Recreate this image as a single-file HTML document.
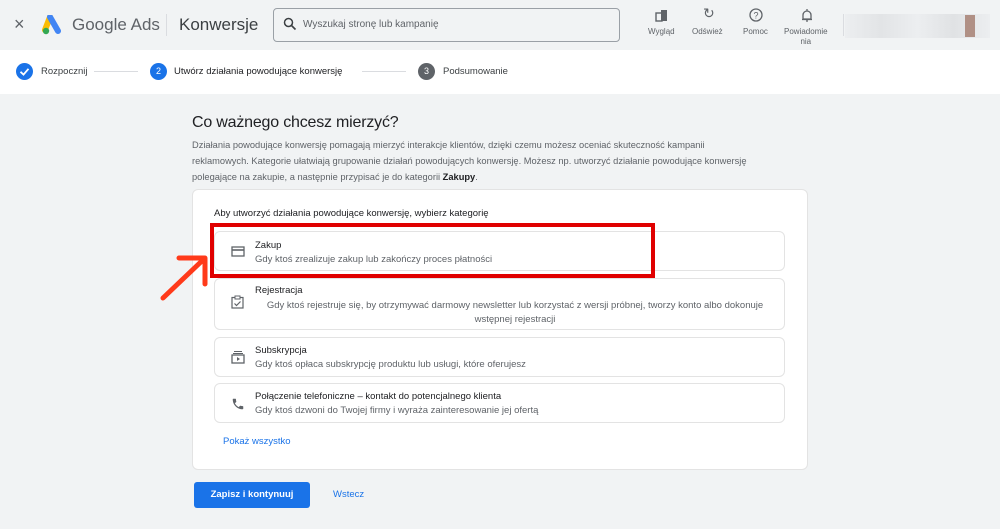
<!DOCTYPE html>
<html><head><meta charset="utf-8"><style>
*{margin:0;padding:0;box-sizing:border-box}
body{width:1000px;height:529px;overflow:hidden;background:#f1f3f4;font-family:"Liberation Sans",sans-serif;position:relative;color:#3c4043}
.a{position:absolute;white-space:nowrap}
.t{font-size:9px;color:#5f6368}
.item{position:absolute;left:214px;width:571px;border:1px solid #e3e3e3;border-radius:6px;background:#fff}
.ti{position:absolute;left:40px;font-size:9.5px;color:#202124}
.de{position:absolute;left:40px;font-size:9.5px;color:#5f6368}
</style></head><body>
<div class="a" style="left:0;top:0;width:1000px;height:50px;background:#f1f3f4"></div>
<div class="a" style="left:14px;top:14px;font-size:18px;color:#5f6368">×</div>
<svg class="a" style="left:42px;top:15px" width="22" height="20" viewBox="0 0 22 20"><path d="M8 2 L3 15" stroke="#fbbc04" stroke-width="6" stroke-linecap="round"/><path d="M8 2 L16 16" stroke="#4285f4" stroke-width="6" stroke-linecap="round"/><circle cx="4" cy="16" r="3.2" fill="#34a853"/></svg>
<div class="a" style="left:72px;top:15px;font-size:17px;color:#5f6368">Google Ads</div>
<div class="a" style="left:166px;top:14px;width:1px;height:22px;background:#dadce0"></div>
<div class="a" style="left:179px;top:15px;font-size:17px;color:#3c4043">Konwersje</div>
<div class="a" style="left:273px;top:8px;width:347px;height:34px;border:1px solid #9aa0a6;border-radius:4px;background:#f1f3f4"></div>
<svg class="a" style="left:283px;top:17px" width="14" height="14" viewBox="0 0 14 14"><circle cx="5.5" cy="5.5" r="4" fill="none" stroke="#3c4043" stroke-width="1.5"/><path d="M8.5 8.5L12.5 12.5" stroke="#3c4043" stroke-width="1.6"/></svg>
<div class="a" style="left:303px;top:19px;font-size:10px;color:#5f6368">Wyszukaj stronę lub kampanię</div>
<svg class="a" style="left:655px;top:9px" width="14" height="13"><rect x="1" y="4" width="6" height="8" fill="none" stroke="#5f6368" stroke-width="1.4"/><rect x="6" y="1" width="6" height="11" fill="#5f6368"/></svg>
<div class="a t" style="left:648px;top:27px;font-size:8px">Wygląd</div>
<div class="a" style="left:703px;top:5px;font-size:14px;color:#5f6368">↻</div>
<div class="a t" style="left:692px;top:27px;font-size:8px">Odśwież</div>
<svg class="a" style="left:749px;top:8px" width="14" height="14"><circle cx="7" cy="7" r="6" fill="none" stroke="#5f6368" stroke-width="1.3"/><text x="7" y="10.5" font-size="9" text-anchor="middle" fill="#5f6368" font-family="Liberation Sans">?</text></svg>
<div class="a t" style="left:743px;top:27px;font-size:8px">Pomoc</div>
<svg class="a" style="left:801px;top:8px" width="12" height="14"><path d="M2 11 V7 a4 4 0 0 1 8 0 V11 Z M1 11.5 H11 M6 1 V3 M5 13 H7" fill="none" stroke="#5f6368" stroke-width="1.3"/></svg>
<div class="a t" style="left:784px;top:27px;font-size:8px;text-align:center;line-height:10px">Powiadomie<br>nia</div>
<div class="a" style="left:843px;top:14px;width:1px;height:22px;background:#dadce0"></div>
<div class="a" style="left:845px;top:14px;width:145px;height:24px;background:linear-gradient(90deg,#eceef0,#e2e4e6,#eceef0,#e0e2e4,#eceef0)"></div>
<div class="a" style="left:965px;top:15px;width:10px;height:22px;background:#b09085"></div>
<div class="a" style="left:0;top:50px;width:1000px;height:44px;background:#fff"></div>
<svg class="a" style="left:16px;top:63px" width="17" height="17"><circle cx="8.5" cy="8.5" r="8.5" fill="#1a73e8"/><path d="M4.5 8.8 L7.5 11.6 L12.5 5.8" fill="none" stroke="#fff" stroke-width="1.8"/></svg>
<div class="a" style="left:41px;top:66px;font-size:9.5px;color:#3c4043">Rozpocznij</div>
<div class="a" style="left:94px;top:71px;width:44px;height:1px;background:#dadce0"></div>
<div class="a" style="left:150px;top:63px;width:17px;height:17px;border-radius:50%;background:#1a73e8;color:#fff;font-size:9px;text-align:center;line-height:17px">2</div>
<div class="a" style="left:174px;top:66px;font-size:9.5px;color:#202124">Utwórz działania powodujące konwersję</div>
<div class="a" style="left:362px;top:71px;width:44px;height:1px;background:#dadce0"></div>
<div class="a" style="left:418px;top:63px;width:17px;height:17px;border-radius:50%;background:#5f6368;color:#fff;font-size:9px;text-align:center;line-height:17px">3</div>
<div class="a" style="left:443px;top:66px;font-size:9.5px;color:#3c4043">Podsumowanie</div>
<div class="a" style="left:192px;top:114px;font-size:16px;color:#202124;letter-spacing:-0.2px">Co ważnego chcesz mierzyć?</div>
<div class="a" style="left:192px;top:137px;font-size:9.3px;color:#5f6368;line-height:16px">Działania powodujące konwersję pomagają mierzyć interakcje klientów, dzięki czemu możesz oceniać skuteczność kampanii<br>reklamowych. Kategorie ułatwiają grupowanie działań powodujących konwersję. Możesz np. utworzyć działanie powodujące konwersję<br>polegające na zakupie, a następnie przypisać je do kategorii <b style="color:#202124">Zakupy</b>.</div>
<div class="a" style="left:192px;top:189px;width:616px;height:281px;background:#fff;border:1px solid #e3e3e3;border-radius:6px"></div>
<div class="a" style="left:214px;top:208px;font-size:9.5px;color:#202124">Aby utworzyć działania powodujące konwersję, wybierz kategorię</div>
<div class="item" style="top:231px;height:40px"><svg class="a" style="left:16px;top:14px" width="14" height="11"><rect x="1" y="1" width="12" height="9" fill="none" stroke="#5f6368" stroke-width="1.3"/><path d="M1 4 H13" stroke="#5f6368" stroke-width="1.6"/></svg><div class="ti" style="top:8px">Zakup</div><div class="de" style="top:22px">Gdy ktoś zrealizuje zakup lub zakończy proces płatności</div></div>
<div class="item" style="top:278px;height:52px"><svg class="a" style="left:16px;top:16px" width="13" height="14"><rect x="1" y="2.5" width="11" height="10.5" fill="none" stroke="#5f6368" stroke-width="1.2"/><rect x="4" y="1" width="5" height="3" fill="#fff" stroke="#5f6368" stroke-width="1"/><path d="M3.5 8.5 L5.5 10.5 L9.5 6.5" fill="none" stroke="#5f6368" stroke-width="1.2"/></svg><div class="ti" style="top:6px">Rejestracja</div><div class="de" style="top:20px;left:40px;width:520px;text-align:center;white-space:normal;line-height:14px">Gdy ktoś rejestruje się, by otrzymywać darmowy newsletter lub korzystać z wersji próbnej, tworzy konto albo dokonuje wstępnej rejestracji</div></div>
<div class="item" style="top:337px;height:40px"><svg class="a" style="left:16px;top:12px" width="14" height="14"><path d="M3 1.5 H11 M2 3.5 H12" stroke="#5f6368" stroke-width="1"/><rect x="1" y="5" width="12" height="8" fill="none" stroke="#5f6368" stroke-width="1.3"/><path d="M6 7 L9 9 L6 11 Z" fill="#5f6368"/></svg><div class="ti" style="top:7px">Subskrypcja</div><div class="de" style="top:21px">Gdy ktoś opłaca subskrypcję produktu lub usługi, które oferujesz</div></div>
<div class="item" style="top:383px;height:40px"><svg class="a" style="left:16px;top:13px" width="14" height="14" viewBox="0 0 24 24"><path d="M6.6 10.8c1.4 2.8 3.8 5.1 6.6 6.6l2.2-2.2c.3-.3.7-.4 1-.2 1.1.4 2.3.6 3.6.6.6 0 1 .4 1 1V20c0 .6-.4 1-1 1C10.6 21 3 13.4 3 4c0-.6.4-1 1-1h3.5c.6 0 1 .4 1 1 0 1.300.2 2.5.6 3.6.1.3 0 .7-.2 1z" fill="#5f6368"/></svg><div class="ti" style="top:7px">Połączenie telefoniczne – kontakt do potencjalnego klienta</div><div class="de" style="top:21px">Gdy ktoś dzwoni do Twojej firmy i wyraża zainteresowanie jej ofertą</div></div>
<div class="a" style="left:223px;top:436px;font-size:9.5px;color:#1a73e8">Pokaż wszystko</div>
<div class="a" style="left:194px;top:482px;width:116px;height:26px;background:#1a73e8;border-radius:3px;color:#fff;font-size:9.5px;font-weight:bold;text-align:center;line-height:26px">Zapisz i kontynuuj</div>
<div class="a" style="left:333px;top:489px;font-size:9.5px;color:#1a73e8">Wstecz</div>
<div class="a" style="left:210px;top:223px;width:445px;height:55px;border:4px solid #e00000"></div>
<svg class="a" style="left:155px;top:250px" width="60" height="55"><path d="M8 48 L50 8 M24 8 H50 V34" fill="none" stroke="#ff3a1a" stroke-width="5" stroke-linecap="round" stroke-linejoin="round"/></svg>
</body></html>
